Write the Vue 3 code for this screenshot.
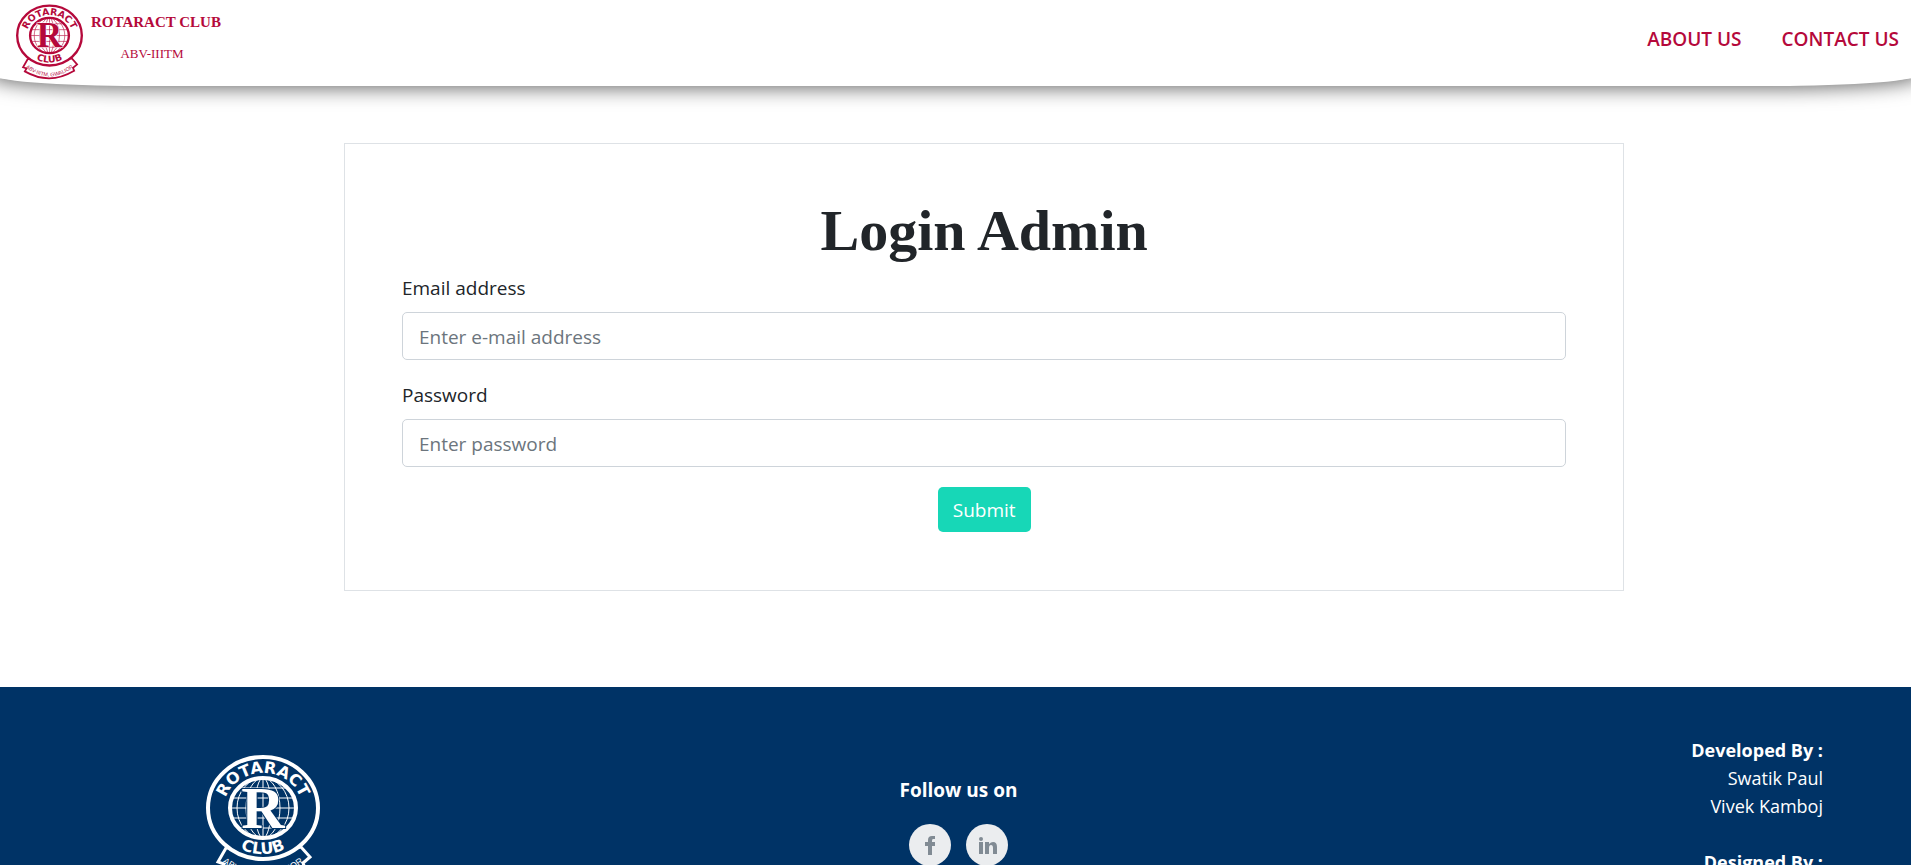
<script setup>
import { ref } from 'vue'

const email = ref('')
const password = ref('')
const parallels = [
  'M31 33H83',
  'M25 43H89',
  'M24 53H90',
  'M25 63H89',
  'M31 73H83'
]
</script>

<template>
  <svg class="defs" aria-hidden="true">
    <symbol id="club-seal" viewBox="0 0 114 128" overflow="visible">
      <path class="seal-back" d="M20 93L12 107L18 109L15 114Q57 138 99 113L97 108L104 102L95 92Z" stroke="currentColor" stroke-width="3" />
      <ellipse class="seal-back" cx="57" cy="53" rx="55" ry="51" stroke="currentColor" stroke-width="4" />
      <g fill="none" stroke="currentColor">
        <ellipse cx="57" cy="53" rx="33" ry="30" stroke-width="4" />
        <path v-for="line in parallels" :key="line" :d="line" />
        <path d="M57 23V83" />
        <ellipse cx="57" cy="53" rx="8" ry="30" />
        <ellipse cx="57" cy="53" rx="17" ry="30" />
        <ellipse cx="57" cy="53" rx="26" ry="30" />
      </g>
      <text class="seal-r" x="57" y="73" text-anchor="middle">R</text>
      <path id="arc-top" d="M18 58V53A39 35 0 0 1 96 53V58" fill="none" />
      <path id="arc-low" d="M8 53A49 46 0 0 0 106 53" fill="none" />
      <path id="arc-ribbon" d="M16 107Q57 138 98 107" fill="none" />
      <text class="seal-name"><textPath href="#arc-top" startOffset="50%" text-anchor="middle">ROTARACT</textPath></text>
      <text class="seal-name"><textPath href="#arc-low" startOffset="50%" text-anchor="middle">CLUB</textPath></text>
      <text class="seal-place"><textPath href="#arc-ribbon" startOffset="50%" text-anchor="middle">ABV-IIITM, GWALIOR</textPath></text>
    </symbol>
  </svg>

  <header class="topbar">
    <a class="brand" href="#">
      <svg class="brand-seal"><use href="#club-seal" /></svg>
      <span class="brand-text">
        <strong>ROTARACT CLUB</strong>
        <span class="campus">ABV-IIITM</span>
      </span>
    </a>
    <nav class="links">
      <a href="#about">ABOUT US</a>
      <a href="#contact">CONTACT US</a>
    </nav>
  </header>

  <main>
    <form class="card" @submit.prevent>
      <h1>Login Admin</h1>
      <label for="email">Email address</label>
      <input id="email" v-model="email" type="email" placeholder="Enter e-mail address">
      <label for="password">Password</label>
      <input id="password" v-model="password" type="password" placeholder="Enter password">
      <button type="submit">Submit</button>
    </form>
  </main>

  <footer class="footer">
    <div class="footer-brand">
      <svg class="footer-seal"><use href="#club-seal" /></svg>
    </div>
    <div class="follow">
      <strong>Follow us on</strong>
      <div class="social">
        <a href="#facebook" aria-label="Facebook">
          <svg viewBox="0 0 42 42"><path d="M19 31V22H16V18H19V16Q19 12 23 12H26V15H24Q23 15 23 17V18H26V22H23V31Z" /></svg>
        </a>
        <a href="#linkedin" aria-label="LinkedIn">
          <svg viewBox="0 0 42 42"><circle cx="15" cy="15" r="2" /><path d="M13 18H17V30H13ZM19 18H23V20Q25 18 27 18Q31 18 31 23V30H27V24Q27 21 25 21Q23 21 23 24V30H19Z" /></svg>
        </a>
      </div>
    </div>
    <div class="credits">
      <strong>Developed By :</strong>
      <span>Swatik Paul</span>
      <span>Vivek Kamboj</span>
      <strong class="next">Designed By :</strong>
    </div>
  </footer>
</template>

<style>
body {
  margin: 0;
  background: #fff;
}

#app {
  height: 100vh;
  overflow: hidden;
  font-family: "Open Sans", "Noto Sans", sans-serif;
  color: #212529;
}
</style>

<style scoped>
.defs {
  position: absolute;
  width: 0;
  height: 0;
}

.seal-back {
  fill: var(--seal-back);
}

.seal-r {
  font: bold 60px "Liberation Serif", serif;
  fill: currentColor;
  stroke: var(--seal-back);
  stroke-width: 2px;
  paint-order: stroke;
}

.seal-name {
  font: bold 16px "DejaVu Sans", sans-serif;
  fill: currentColor;
}

.seal-place {
  font: 9px "Liberation Sans", sans-serif;
  fill: currentColor;
}

.topbar {
  display: flex;
  justify-content: space-between;
  box-sizing: border-box;
  height: 86px;
  margin: 0 -10px;
  padding: 4px 22px 0 26px;
  background: #fff;
  border-radius: 0 0 150px 150px / 0 0 12px 12px;
  box-shadow: 0 2px 20px rgba(0, 0, 0, 0.6);
}

.brand {
  display: flex;
  gap: 8px;
  color: #b5093b;
  text-decoration: none;
}

.brand-seal {
  --seal-back: #fff;
  overflow: visible;
  width: 67px;
  height: 76px;
}

.brand-text {
  display: flex;
  flex-direction: column;
  align-items: center;
  gap: 12px;
  padding-top: 8px;
  font-family: "Liberation Serif", serif;
  font-size: 13px;
  line-height: 20px;
}

.brand-text strong {
  font-size: 15px;
}

.campus {
  padding-right: 8px;
}

.links {
  display: flex;
  gap: 40px;
  padding-top: 20px;
  font-size: 19px;
  font-weight: 600;
  line-height: 30px;
}

.links a {
  color: #b5093b;
  text-decoration: none;
}

.card {
  display: flex;
  flex-direction: column;
  margin: 57px 15% 0 18%;
  padding: 57px 57px 58px;
  border: 1px solid #dee2e6;
}

h1 {
  margin: 0 0 12px;
  font: bold 58px/60px "Liberation Serif", serif;
  text-align: center;
}

label {
  margin-bottom: 9px;
  font-size: 19px;
  line-height: 30px;
}

input {
  box-sizing: border-box;
  height: 48px;
  margin-bottom: 20px;
  padding: 10px 16px 8px;
  border: 1px solid #ced4da;
  border-radius: 5px;
  font: 19px "Open Sans", sans-serif;
  color: #495057;
}

input::placeholder {
  color: #6c757d;
}

button {
  align-self: center;
  height: 45px;
  padding: 0 15px;
  border: 0;
  border-radius: 5px;
  background: #17d7b7;
  color: #fff;
  font: 19px "Open Sans", sans-serif;
}

.footer {
  display: grid;
  grid-template-columns: 1fr 1fr 1fr;
  margin-top: 96px;
  padding: 49px 88px 49px 94px;
  background: #003366;
  color: #fff;
  font-size: 18px;
  line-height: 28px;
}

.footer-brand {
  padding: 19px 0 0 112px;
}

.footer-seal {
  --seal-back: #003366;
  overflow: visible;
  width: 114px;
  height: 128px;
}

.follow {
  display: flex;
  flex-direction: column;
  align-items: center;
  gap: 20px;
  padding-top: 40px;
  font-size: 19px;
}

.social {
  display: flex;
  gap: 15px;
}

.social a {
  width: 42px;
  height: 42px;
  border-radius: 50%;
  background: #ebedef;
}

.social svg {
  display: block;
  fill: #818b94;
}

.credits {
  display: flex;
  flex-direction: column;
  align-items: flex-end;
}

.next {
  margin-top: 28px;
}
</style>
